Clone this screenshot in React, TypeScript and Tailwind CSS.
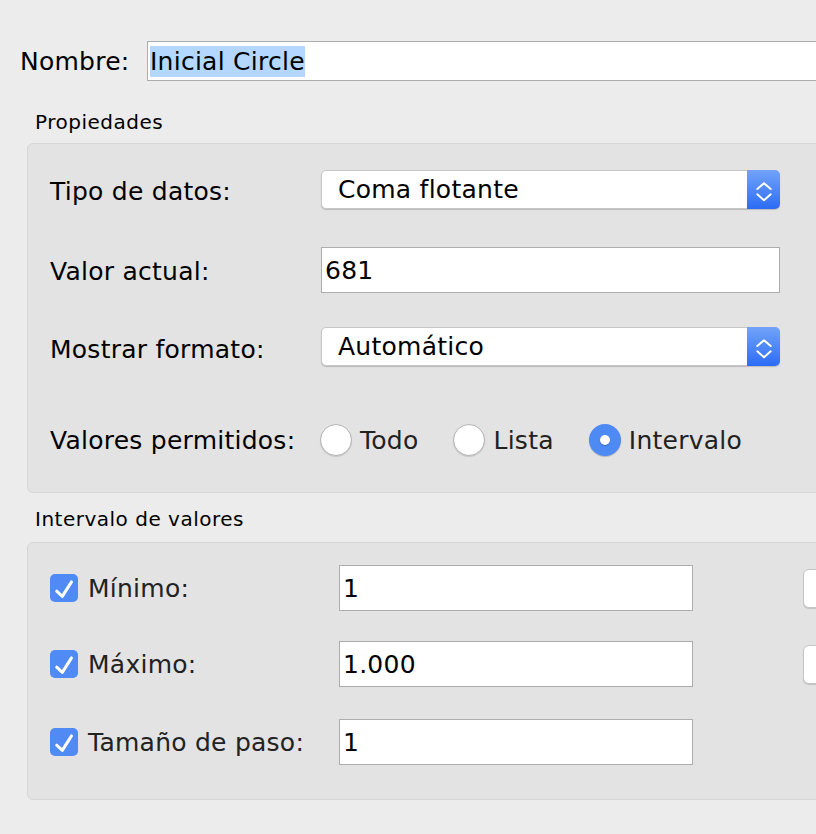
import React from "react";

function PopupButton({ value }: { value: string }) {
  return (
    <div className="flex h-[39px] w-[459px] items-stretch rounded-[5px] border border-[#c6c6c6] bg-white shadow-[0_1px_1px_rgba(0,0,0,0.18)]">
      <div className="flex flex-1 items-center pl-[16px] text-black">{value}</div>
      <div className="-my-px -mr-px flex w-[33px] items-center justify-center rounded-r-[5px] bg-linear-to-b from-[#72a3f8] to-[#2c6bf5]">
        <svg width="32" height="39" viewBox="0 0 32 39" fill="none">
          <path d="M9.3 19 L16 13.3 L22.7 19" stroke="white" strokeWidth="2" strokeLinecap="round" strokeLinejoin="round" />
          <path d="M9.3 24.3 L16 30.3 L22.7 24.3" stroke="white" strokeWidth="2" strokeLinecap="round" strokeLinejoin="round" />
        </svg>
      </div>
    </div>
  );
}

function TextField({ value, width }: { value: string; width: string }) {
  return (
    <div className={`flex h-[46px] items-center border border-[#adadad] bg-white pl-[3px] text-black ${width}`}>
      {value}
    </div>
  );
}

function Radio({ label, checked }: { label: string; checked?: boolean }) {
  return (
    <div className="flex items-center gap-[8px]">
      {checked ? (
        <div className="flex h-[32px] w-[32px] items-center justify-center rounded-full bg-[#4d8af4] shadow-[0_1px_1px_rgba(0,0,0,0.2)]">
          <div className="h-[10px] w-[10px] rounded-full bg-white shadow-[0_1px_1px_rgba(0,0,0,0.25)]" />
        </div>
      ) : (
        <div className="h-[32px] w-[32px] rounded-full border border-[#b3b3b3] bg-white shadow-[0_1px_1px_rgba(0,0,0,0.12)]" />
      )}
      <span className="text-[#222]">{label}</span>
    </div>
  );
}

function Checkbox() {
  return (
    <div className="flex h-[28px] w-[28px] shrink-0 items-center justify-center rounded-[5px] bg-[#4f8af5]">
      <svg width="28" height="28" viewBox="0 0 28 28" fill="none">
        <path d="M6.7 17.2 L12.3 22.4 L21.5 7.9" stroke="white" strokeWidth="3" strokeLinecap="round" strokeLinejoin="round" />
      </svg>
    </div>
  );
}

function RangeRow({ label, value, button, mt }: { label: string; value: string; button?: boolean; mt: string }) {
  return (
    <div className={`flex h-[46px] items-center ${mt}`}>
      <div className="flex w-[289px] shrink-0 items-center gap-[10px]">
        <Checkbox />
        <span className="text-[#222]">{label}</span>
      </div>
      <TextField value={value} width="w-[354px] shrink-0" />
      {button && (
        <div className="ml-[110px] h-[39px] w-[60px] shrink-0 rounded-[6px] border border-[#c6c6c6] bg-white shadow-[0_1px_1px_rgba(0,0,0,0.15)]" />
      )}
    </div>
  );
}

export default function App() {
  return (
    <div className="h-[834px] w-[816px] overflow-hidden bg-[#ececec] font-['DejaVu_Sans',sans-serif] text-[25px] leading-none tracking-[0.25px]">
      {/* Name row */}
      <div className="flex items-center pt-[41px]">
        <div className="w-[147px] shrink-0 pl-[20px] text-black">Nombre:</div>
        <div className="flex h-[40px] w-[700px] shrink-0 items-center border border-[#adadad] bg-white pl-[2px]">
          <span className="inline-block bg-[#b3d7ff] leading-[31px] text-black">Inicial Circle</span>
        </div>
      </div>

      {/* Properties */}
      <div className="h-[62px] pl-[35px] pt-[29px] text-[20px] leading-[24px] tracking-[0.5px] text-black">Propiedades</div>
      <div className="ml-[27px] w-[820px] rounded-[6px] border border-[#d6d6d6] bg-[#e3e3e3] pb-[36px] pl-[22px] pt-[26px]">
        <div className="flex h-[39px] items-center">
          <div className="w-[271px] shrink-0 pt-[4px] text-black">Tipo de datos:</div>
          <PopupButton value="Coma flotante" />
        </div>
        <div className="mt-[38px] flex h-[46px] items-center">
          <div className="w-[271px] shrink-0 pt-[2px] text-black">Valor actual:</div>
          <TextField value="681" width="w-[459px]" />
        </div>
        <div className="mt-[34px] flex h-[39px] items-center">
          <div className="w-[271px] shrink-0 pt-[5px] text-black">Mostrar formato:</div>
          <PopupButton value="Automático" />
        </div>
        <div className="mt-[58px] flex h-[32px] items-center">
          <div className="w-[270px] shrink-0 pt-[1px] text-black">Valores permitidos:</div>
          <div className="flex items-center gap-[35px]">
            <Radio label="Todo" />
            <Radio label="Lista" />
            <Radio label="Intervalo" checked />
          </div>
        </div>
      </div>

      {/* Value range */}
      <div className="h-[49px] pl-[35px] pt-[14px] text-[20px] leading-[24px] tracking-[0.5px] text-black">Intervalo de valores</div>
      <div className="ml-[27px] w-[820px] rounded-[6px] border border-[#d6d6d6] bg-[#e3e3e3] pb-[34px] pl-[22px] pt-[22px]">
        <RangeRow label="Mínimo:" value="1" button mt="" />
        <RangeRow label="Máximo:" value="1.000" button mt="mt-[30px]" />
        <RangeRow label="Tamaño de paso:" value="1" mt="mt-[32px]" />
      </div>
    </div>
  );
}
